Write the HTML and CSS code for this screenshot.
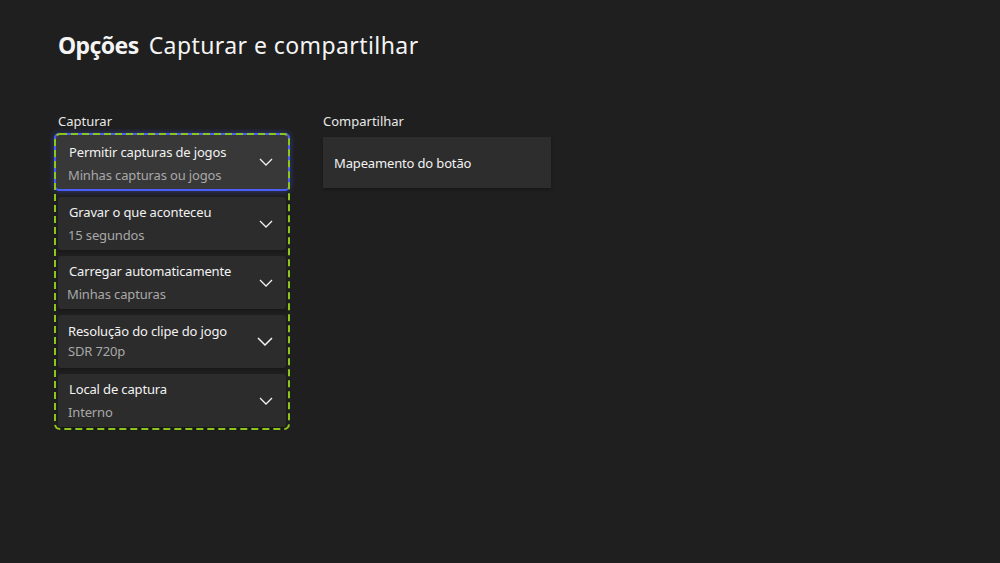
FILE: index.html
```html
<!DOCTYPE html>
<html lang="pt-BR">
<head>
<meta charset="utf-8">
<title>Opções - Capturar e compartilhar</title>
<link rel="stylesheet" href="styles.css">
</head>
<body>
<main class="page">
  <h1 class="title"><span class="title-strong">Opções</span> <span class="title-rest">Capturar e compartilhar</span></h1>
  <div class="columns">
    <section class="col col-capture">
      <div class="col-label">Capturar</div>
      <div class="group">
        <div class="tile tile-focused">
          <div class="tile-text">
            <div class="tile-primary">Permitir capturas de jogos</div>
            <div class="tile-secondary">Minhas capturas ou jogos</div>
          </div>
          <svg class="chev" viewBox="0 0 14 8" width="14" height="8"><path d="M1 1 L7 7 L13 1" fill="none" stroke="#f2f2f2" stroke-width="1.3"/></svg>
        </div>
        <div class="tile">
          <div class="tile-text">
            <div class="tile-primary">Gravar o que aconteceu</div>
            <div class="tile-secondary">15 segundos</div>
          </div>
          <svg class="chev" viewBox="0 0 14 8" width="14" height="8"><path d="M1 1 L7 7 L13 1" fill="none" stroke="#f2f2f2" stroke-width="1.3"/></svg>
        </div>
        <div class="tile">
          <div class="tile-text">
            <div class="tile-primary">Carregar automaticamente</div>
            <div class="tile-secondary shift">Minhas capturas</div>
          </div>
          <svg class="chev" viewBox="0 0 14 8" width="14" height="8"><path d="M1 1 L7 7 L13 1" fill="none" stroke="#f2f2f2" stroke-width="1.3"/></svg>
        </div>
        <div class="tile tile-tight">
          <div class="tile-text">
            <div class="tile-primary">Resolução do clipe do jogo</div>
            <div class="tile-secondary">SDR 720p</div>
          </div>
          <svg class="chev chev-big" viewBox="0 0 16 9" width="16" height="9"><path d="M1 1 L8 8 L15 1" fill="none" stroke="#f2f2f2" stroke-width="1.5"/></svg>
        </div>
        <div class="tile">
          <div class="tile-text">
            <div class="tile-primary">Local de captura</div>
            <div class="tile-secondary">Interno</div>
          </div>
          <svg class="chev" viewBox="0 0 14 8" width="14" height="8"><path d="M1 1 L7 7 L13 1" fill="none" stroke="#f2f2f2" stroke-width="1.3"/></svg>
        </div>
        <svg class="group-outline" viewBox="0 0 236 297" width="236" height="297" aria-hidden="true"><rect x="1" y="1" width="234" height="295" rx="5" ry="5" fill="none" stroke="#8cc51c" stroke-width="2" stroke-dasharray="7 4"/></svg>
      </div>
    </section>
    <section class="col col-share">
      <div class="col-label">Compartilhar</div>
      <div class="share-tile">Mapeamento do botão</div>
    </section>
  </div>
</main>
</body>
</html>
```

FILE: styles.css
```css
* { box-sizing: border-box; }
html, body {
  margin: 0;
  padding: 0;
  background: #1f1f1f;
  width: 1000px;
  height: 563px;
  overflow: hidden;
}
body {
  font-family: "Noto Sans", "Open Sans", sans-serif;
  color: #f0f0f0;
}
.page {
  padding: 30px 0 0 58px;
}
.title {
  margin: 0;
  font-size: 23px;
  line-height: 30px;
  font-weight: 400;
  color: #f4f4f4;
}
.title-strong {
  font-weight: 700;
  letter-spacing: -0.6px;
  margin-right: 4px;
}
.title-rest {
  letter-spacing: 0.42px;
}
.columns {
  display: flex;
  gap: 33px;
  margin-top: 53px;
  margin-left: -4px;
}
.col-label {
  font-size: 13px;
  line-height: 16px;
  color: #e8e8e8;
  padding-left: 4px;
  margin-bottom: 4px;
}
.col-share .col-label {
  padding-left: 0;
  margin-bottom: 8px;
}
.group {
  position: relative;
  width: 236px;
  height: 297px;
  padding: 0 4px 3px;
  display: flex;
  flex-direction: column;
  gap: 6px;
}
.group-outline {
  position: absolute;
  left: 0;
  top: 0;
  pointer-events: none;
}
.tile {
  height: 53px;
  flex: none;
  background: #2c2c2c;
  border-radius: 3px;
  display: flex;
  align-items: center;
  padding: 0 13px 0 11px;
  box-shadow: 0 2px 3px rgba(0,0,0,0.25);
}
.tile-text {
  flex: 1;
  display: flex;
  flex-direction: column;
  gap: 3px;
  margin-top: -1px;
}
.tile-primary {
  font-size: 13px;
  line-height: 20px;
  letter-spacing: -0.15px;
  color: #f2f2f2;
}
.tile-secondary {
  font-size: 13px;
  line-height: 20px;
  letter-spacing: -0.15px;
  color: #a8a8a8;
  margin-left: -1px;
}
.tile-secondary.shift { margin-left: -2px; }
.tile-focused {
  height: 58px;
  margin: 0 -4px;
  background: #383838;
  border: 2px solid #4b5ef5;
  border-radius: 5px;
  padding: 0 15px 0 13px;
  box-shadow: 0 0 6px rgba(75, 94, 245, 0.45);
}
.tile-focused .tile-text { margin-top: 2px; }
.tile-tight .tile-text { gap: 0; margin-top: -2px; }
.tile-tight .tile-primary { margin-left: -1px; }
.chev {
  flex: none;
  display: block;
}
.share-tile {
  width: 228px;
  height: 51px;
  background: #2d2d2d;
  display: flex;
  align-items: center;
  padding-left: 11px;
  font-size: 13px;
  letter-spacing: -0.15px;
  color: #f2f2f2;
  box-shadow: 0 2px 3px rgba(0,0,0,0.25);
}
```
